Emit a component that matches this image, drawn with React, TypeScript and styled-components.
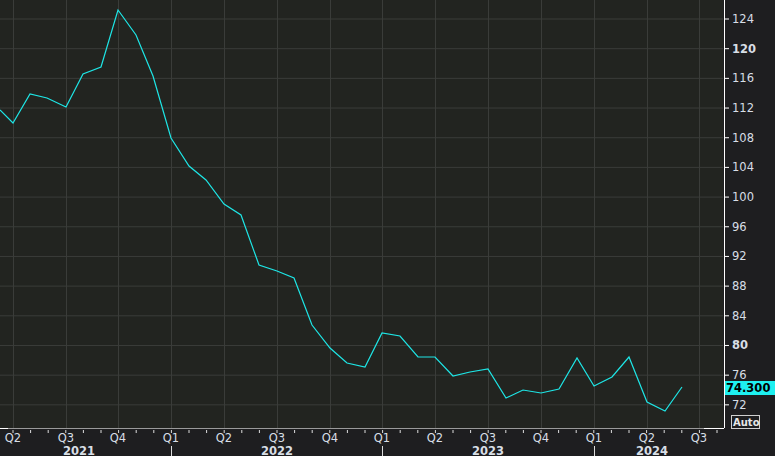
import React from "react";
import styled, { createGlobalStyle } from "styled-components";

const Global = createGlobalStyle`
  html, body { margin: 0; padding: 0; background: #1e1e20; overflow: hidden; }
`;

const Frame = styled.div`
  width: 775px;
  height: 456px;
  background: #1e1e20;
  font-family: "DejaVu Sans", Verdana, sans-serif;
`;

const Chart = styled.svg`
  display: block;
  width: 775px;
  height: 456px;
`;

const W = 723;
const H = 428;
const yOf = (v: number) => 19 + (124 - v) * 7.42;

const pts: [number, number][] = [
  [0, 110], [13, 123], [30, 94], [47, 98], [66, 107], [83, 74], [101, 67], [118, 10],
  [136, 35], [153, 76], [171, 138], [189, 166], [206, 180], [224, 204], [241, 215],
  [259, 265], [277, 271], [294, 278], [312, 325], [330, 348], [347, 363], [365, 367],
  [382, 333], [400, 336], [418, 357], [435, 357], [453, 376], [470, 372], [488, 369],
  [506, 398], [523, 390], [541, 393], [559, 389], [577, 358], [594, 386], [612, 377],
  [629, 357], [647, 402], [665, 411], [682, 387],
];

const vx = [13, 66, 118, 171, 224, 277, 330, 382, 435, 488, 541, 594, 647, 699];
const qLabels = ["Q2", "Q3", "Q4", "Q1", "Q2", "Q3", "Q4", "Q1", "Q2", "Q3", "Q4", "Q1", "Q2", "Q3"];
const yVals = [124, 120, 116, 112, 108, 104, 100, 96, 92, 88, 84, 80, 76, 72];
const years: [number, string][] = [[79, "2021"], [277, "2022"], [488, "2023"], [652, "2024"]];

export default function App() {
  const minor: number[] = [];
  for (let x = -4.6; x < 725; x += 17.6) minor.push(x);
  return (
    <Frame>
      <Global />
      <Chart viewBox="0 0 775 456">
        <rect x={0} y={0} width={W} height={H} fill="#222420" />
        {yVals.map((v) => (
          <line key={v} x1={0} x2={W} y1={yOf(v)} y2={yOf(v)} stroke="#3a3c39" strokeWidth={1} />
        ))}
        {vx.map((x) => (
          <line key={x} x1={x + 0.5} x2={x + 0.5} y1={0} y2={H} stroke="#3a3c39" strokeWidth={1} />
        ))}
        <polyline
          points={pts.map(([x, y]) => `${x},${y}`).join(" ")}
          fill="none"
          stroke="#1ee6e6"
          strokeWidth={1.2}
        />
        <line x1={724.5} x2={724.5} y1={0} y2={H} stroke="#ffffff" strokeWidth={1} />
        {yVals.map((v) => (
          <g key={v}>
            <line x1={724} x2={729} y1={yOf(v)} y2={yOf(v)} stroke="#fff" />
            <text
              x={732}
              y={yOf(v) + 4}
              fill="#d8dee6"
              fontSize={11.5}
              fontWeight={v === 120 || v === 80 ? "bold" : "normal"}
            >
              {v}
            </text>
          </g>
        ))}
        <line x1={0} x2={W} y1={428.5} y2={428.5} stroke="#9a9a9a" strokeWidth={1} />
        <line x1={0} x2={8} y1={428.5} y2={428.5} stroke="#fff" strokeWidth={1} />
        {minor.map((x, i) => (
          <line key={i} x1={x} x2={x} y1={430} y2={433} stroke="#ddd" />
        ))}
        {qLabels.map((q, i) => (
          <text key={i} x={vx[i]} y={442} fill="#d8dee6" fontSize={11.5} textAnchor="middle">
            {q}
          </text>
        ))}
        {[171, 382, 594].map((x) => (
          <line key={x} x1={x + 0.5} x2={x + 0.5} y1={446} y2={456} stroke="#ddd" />
        ))}
        {years.map(([x, y]) => (
          <text key={y} x={x} y={455} fill="#d8dee6" fontSize={11.5} fontWeight="bold" textAnchor="middle">
            {y}
          </text>
        ))}
        <rect x={725} y={381} width={50} height={14} fill="#1ef0f0" />
        <text x={726} y={392} fill="#000" fontSize={11.5} fontWeight="bold">
          74.300
        </text>
        <line x1={704} x2={724} y1={428.5} y2={428.5} stroke="#fff" />
        <rect x={731.5} y={415.5} width={28} height={13} fill="#1e1e20" stroke="#cfcfcf" />
        <text x={733} y={426} fill="#e6e6e6" fontSize={10} fontWeight="bold">
          Auto
        </text>
      </Chart>
    </Frame>
  );
}
